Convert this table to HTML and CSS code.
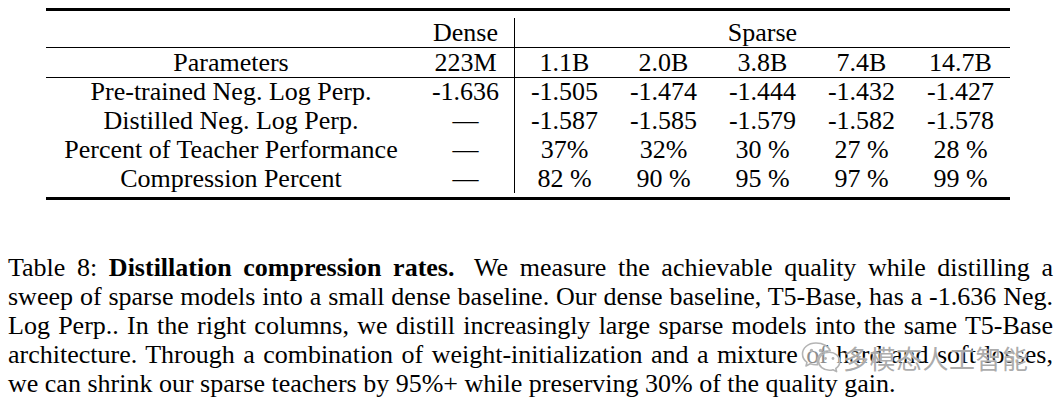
FILE: index.html
```html
<!DOCTYPE html>
<html>
<head>
<meta charset="utf-8">
<link rel="stylesheet" href="styles.css">
</head>
<body>
<div class="page">
  <table class="tbl">
    <colgroup>
      <col class="c-label">
      <col class="c-dense">
      <col class="c-sp"><col class="c-sp"><col class="c-sp"><col class="c-sp"><col class="c-sp">
    </colgroup>
    <tr class="hdr">
      <td></td>
      <td class="vr vr-top">Dense</td>
      <td colspan="5">Sparse</td>
    </tr>
    <tr class="params">
      <td>Parameters</td>
      <td class="vr">223M</td>
      <td>1.1B</td><td>2.0B</td><td>3.8B</td><td>7.4B</td><td>14.7B</td>
    </tr>
    <tr class="data">
      <td>Pre-trained Neg. Log Perp.</td>
      <td class="vr">-1.636</td>
      <td>-1.505</td><td>-1.474</td><td>-1.444</td><td>-1.432</td><td>-1.427</td>
    </tr>
    <tr class="data">
      <td>Distilled Neg. Log Perp.</td>
      <td class="vr">—</td>
      <td>-1.587</td><td>-1.585</td><td>-1.579</td><td>-1.582</td><td>-1.578</td>
    </tr>
    <tr class="data">
      <td>Percent of Teacher Performance</td>
      <td class="vr">—</td>
      <td>37%</td><td>32%</td><td>30 %</td><td>27 %</td><td>28 %</td>
    </tr>
    <tr class="data last">
      <td>Compression Percent</td>
      <td class="vr vr-bot">—</td>
      <td>82 %</td><td>90 %</td><td>95 %</td><td>97 %</td><td>99 %</td>
    </tr>
  </table>

  <div class="caption">
    <span class="cl">Table 8: <b>Distillation compression rates.</b> <span class="gap"></span>We measure the achievable quality while distilling a</span>
    <span class="cl">sweep of sparse models into a small dense baseline. Our dense baseline, T5-Base, has a -1.636 Neg.</span>
    <span class="cl">Log Perp.. In the right columns, we distill increasingly large sparse models into the same T5-Base</span>
    <span class="cl">architecture. Through a combination of weight-initialization and a mixture of hard and soft losses,</span>
    <span class="cl last">we can shrink our sparse teachers by 95%+ while preserving 30% of the quality gain.</span>
  </div>

  <div class="watermark">
    <svg class="wm-icon" width="40" height="34" viewBox="0 0 40 34">
      <path d="M15 2 C7 2 1.5 7 1.5 13 C1.5 16.5 3.3 19.4 6 21.3 L5 25 L9.3 22.8 C11 23.4 13 23.8 15 23.8 C15.6 23.8 16.2 23.8 16.8 23.7 C16.4 22.6 16.2 21.5 16.2 20.3 C16.2 14.4 21.6 9.8 28.3 9.8 C28.6 9.8 28.9 9.8 29.2 9.8 C27.8 5.2 22 2 15 2 Z" fill="rgba(255,255,255,0.55)" stroke="#b4b4b4" stroke-width="1.6" stroke-linejoin="round"/>
      <path d="M28.3 11.2 C22.4 11.2 17.6 15.3 17.6 20.3 C17.6 25.3 22.4 29.3 28.3 29.3 C29.6 29.3 30.9 29.1 32 28.7 L35.6 30.6 L34.8 27.5 C37.2 25.9 38.8 23.3 38.8 20.3 C38.8 15.3 34.1 11.2 28.3 11.2 Z" fill="rgba(255,255,255,0.55)" stroke="#b4b4b4" stroke-width="1.6" stroke-linejoin="round"/>
      <circle cx="10.5" cy="9.5" r="1.7" fill="#b4b4b4"/>
      <circle cx="19.5" cy="9.5" r="1.7" fill="#b4b4b4"/>
      <circle cx="24.5" cy="17.5" r="1.4" fill="#b4b4b4"/>
      <circle cx="32" cy="17.5" r="1.4" fill="#b4b4b4"/>
    </svg>
    <span class="wm-text">多模态人工智能</span>
  </div>
</div>
</body>
</html>
```

FILE: styles.css
```css
html, body {
  margin: 0;
  padding: 0;
  background: #ffffff;
}

body {
  font-family: "Liberation Serif", "Times New Roman", serif;
  color: #000;
}

.page {
  position: relative;
  width: 1063px;
  height: 408px;
  padding-top: 8px;
  box-sizing: border-box;
  overflow: hidden;
}

.tbl {
  margin-left: 46px;
  width: 964px;
  table-layout: fixed;
  border-collapse: separate;
  border-spacing: 0;
  border-top: 3px solid #000;
  border-bottom: 3px solid #000;
  font-family: "Liberation Serif", "Times New Roman", serif;
  font-size: 26px;
  line-height: 29px;
}

.c-label { width: 370px; }
.c-dense { width: 99px; }
.c-sp { width: 99px; }

.tbl td {
  padding: 0;
  height: 29px;
  text-align: center;
  white-space: nowrap;
  vertical-align: bottom;
}

.tbl .hdr td {
  height: 36px;
  border-bottom: 1px solid #000;
}

.tbl .params td {
  border-bottom: 1px solid #000;
}

.tbl .data td {
  vertical-align: top;
  line-height: 27px;
}

.tbl .last td {
  height: 32px;
}

.vr {
  background-image: linear-gradient(#000, #000);
  background-repeat: no-repeat;
  background-position: right top;
  background-size: 1px 100%;
}

.vr.vr-top {
  background-position: right bottom;
  background-size: 1px 29px;
}

.vr.vr-bot {
  background-size: 1px 28px;
}

.caption {
  margin: 53px 0 0 8px;
  width: 1045px;
  font-size: 26px;
  line-height: 29px;
}

.cl {
  display: block;
  text-align: justify;
  text-align-last: justify;
  white-space: nowrap;
}

.cl.last {
  text-align-last: left;
}

.gap {
  display: inline-block;
  width: 8px;
}

.watermark {
  position: absolute;
  left: 801px;
  top: 341px;
  display: flex;
  align-items: center;
  gap: 2px;
}

.wm-text {
  font-family: "Noto Sans CJK SC", "Noto Sans", sans-serif;
  font-size: 26px;
  line-height: 34px;
  color: rgba(150, 150, 150, 0.8);
  text-shadow: 0 0 2px rgba(255, 255, 255, 0.9), 0 0 1px rgba(255, 255, 255, 0.9);
  letter-spacing: 0.5px;
}
```
